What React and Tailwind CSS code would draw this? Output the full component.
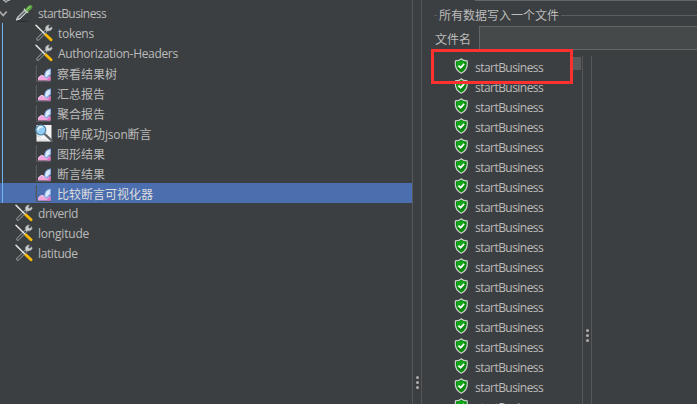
import React from "react";

function Tools() {
  return (
    <svg width="18" height="18" viewBox="0 0 18 18" fill="none" className="shrink-0">
      <path d="M2.8 15.2 10.5 7.5" stroke="#8f9496" strokeWidth="3.2" strokeLinecap="round" />
      <path d="M3 15 10.5 7.5" stroke="#34383a" strokeWidth="1.4" strokeLinecap="round" />
      <path d="M11.3 7.2 15.4 6.6 17.2 4.8 16.6 2.8 14.8 4.4 13.2 3.4 14.4 .9 12 1.4 10.4 3.4 10.4 5.8Z" fill="#c9cccc" stroke="#999d9e" strokeWidth=".6" />
      <path d="M1 1.2 9.6 9.8" stroke="#e6e6e6" strokeWidth="1.5" strokeLinecap="round" />
      <path d="M11 11 16 15.8" stroke="#f9bd09" strokeWidth="2.9" strokeLinecap="round" />
      <path d="M11.2 12.2 15.3 16.3" stroke="#e0a000" strokeWidth=".7" />
    </svg>
  );
}

function Dropper() {
  return (
    <svg width="19" height="18" viewBox="0 0 19 18" fill="none" className="shrink-0">
      <ellipse cx="8" cy="17.2" rx="7" ry=".8" fill="#2c2f31" />
      <path d="M1.2 16.2 2.6 13 9.6 6 11.9 8.2 5 15Z" fill="#a8aeae" stroke="#dfe3e3" strokeWidth=".8" />
      <path d="M4 13.8 10 7.8" stroke="#5c6364" strokeWidth="1.2" />
      <path d="M9 4.8 13 8.8" stroke="#c8dfc2" strokeWidth="1.5" />
      <path d="M10 5.2C11.6 4.4 12 2.2 14.4 1.2c2-.7 3.6.8 2.9 2.6-.9 2.1-3.2 2.7-4.1 4.2Z" fill="#58a040" />
      <path d="M12 5.3 15 2.6" stroke="#8fcf7a" strokeWidth="1.1" strokeLinecap="round" />
    </svg>
  );
}

function Graph() {
  return (
    <svg width="18" height="18" viewBox="0 0 18 18" fill="none" className="shrink-0">
      <path d="M1.5 1v16M1 17.5h15" stroke="#54575c" />
      <path d="M0 3.5h1M0 6.5h1M0 9.5h1M0 12.5h1" stroke="#505357" />
      <path d="M3 16.5V14L6.5 11 9 12 11 14 15.5 12V16.5Z" fill="#f0a5dc" />
      <path d="M3.3 13.9 6.5 11.3 9 12.3 10.5 14" stroke="#f9d2ef" />
      <path d="M9.3 11.3C9.3 7.5 11.8 5 16 4.5v6l-4.2 4.2C10.1 14.1 9.3 12.8 9.3 11.3Z" fill="#86abe6" />
      <path d="M10.2 10.9C10.6 7.9 12.6 6.1 14.9 5.7V9.5L11.6 13C10.5 12.5 10.1 11.9 10.2 10.9Z" fill="#dcebff" />
      <path d="m11.5 16.5 4-4.5V16.5Z" fill="#e36fc4" />
    </svg>
  );
}

function Search() {
  return (
    <svg width="18" height="18" viewBox="0 0 18 18" fill="none" className="shrink-0">
      <path d="M1.5 1H16.5V17.5H1.5Z" fill="#f5f5f5" />
      <path d="M2 12 6 13.5M2 16h10" stroke="#d4d4d4" />
      <path d="m10 10.4 6.7 6.2" stroke="#62666b" strokeWidth="2.2" strokeLinecap="round" />
      <circle cx="5.8" cy="6" r="5" fill="#94cdf1" stroke="#4d83a3" strokeWidth="1.2" />
      <path d="M3 5.7C3.4 3.5 5 2.7 7 3" stroke="#e2f5ff" strokeWidth="1.7" strokeLinecap="round" />
    </svg>
  );
}

function Shield() {
  return (
    <svg width="14" height="16" viewBox="0 0 14 16" fill="none" className="shrink-0">
      <path d="M7.3 .8C6 2.2 4 2.8 1.5 2.9 .7 8.3 2.5 12.8 7.3 15.2 12.1 12.8 13.9 8.3 13.1 2.9 10.6 2.8 8.6 2.2 7.3 .8Z" fill="#078a0c" stroke="#ccd0cc" strokeWidth="1.2" />
      <path d="M7.3 2.2C6 3.3 4.6 3.8 2.8 3.9 2.4 7 3 9 4 10.5L11.8 4C10 3.8 8.5 3.3 7.3 2.2Z" fill="#13a51a" />
      <path d="m4.5 7.7 2.1 2 3.6-3.8" stroke="#fff" strokeWidth="1.7" />
    </svg>
  );
}

const children = [
  [Tools, "tokens", "mt-px tracking-[-0.3px]"],
  [Tools, "Authorization-Headers", "mt-px tracking-[-0.33px]"],
  [Graph, "察看结果树", "mt-px -ml-px pt-0.5"],
  [Graph, "汇总报告", "mt-px -ml-px pt-0.5"],
  [Graph, "聚合报告", "mt-px -ml-px pt-0.5"],
  [Search, <>听单成功<span className="tracking-[-0.2px]">json</span>断言</>, "mt-px -ml-px pt-0.5"],
  [Graph, "图形结果", "mt-px -ml-px pt-0.5"],
  [Graph, "断言结果", "mt-px -ml-px pt-0.5"],
  [Graph, "比较断言可视化器", "mt-px -ml-px pt-0.5"],
];

function TreeRow({ icon: Icon, label, nested, selected, textClass }) {
  return (
    <div className={`flex h-5 items-center gap-[5px] ${nested ? "pl-[35px]" : "pl-[15px]"} ${selected ? "bg-[#4b6eaf] text-[#dddddd]" : ""}`}>
      <Icon />
      <span className={textClass}>{label}</span>
    </div>
  );
}

function Dots() {
  return (
    <div className="flex flex-col items-center gap-[2px]">
      <i className="size-[3px] rounded-full bg-[#adadad]" />
      <i className="size-[3px] rounded-full bg-[#adadad]" />
      <i className="size-[3px] rounded-full bg-[#adadad]" />
    </div>
  );
}

export default function App() {
  return (
    <div className="relative flex h-[404px] w-[697px] overflow-hidden whitespace-nowrap bg-[#3c3f41] font-['Open_Sans','Noto_Sans_CJK_SC',sans-serif] text-[12px] leading-5 text-[#bbbbbb]">
      <aside className="w-[412px] shrink-0">
        <div className="h-[3px] pl-[3px]">
          <svg width="8" height="3" viewBox="0 0 8 3">
            <path d="M0 0h2l1 1 1-1h3v1H5L3 3 1 1H0Z" fill="#a9adae" />
          </svg>
        </div>
        <div className="flex h-5 items-center">
          <svg width="15" height="18" viewBox="0 0 15 18" fill="none" className="shrink-0">
            <path d="m-.5 7.5 3.7 4 3.5-4" stroke="#adadad" strokeWidth="1.8" />
          </svg>
          <Dropper />
          <span className="ml-1 mt-px tracking-[-0.54px]">startBusiness</span>
        </div>
        <div className="relative">
          {children.map(([icon, label, textClass], i) => (
            <TreeRow key={i} icon={icon} label={label} textClass={textClass} nested selected={i === 8} />
          ))}
          <div className="absolute inset-y-0 left-[2px] w-px bg-[#70b5f5]" />
        </div>
        <TreeRow icon={Tools} label="driverId" textClass="mt-px tracking-[-0.45px]" />
        <TreeRow icon={Tools} label="longitude" textClass="mt-px tracking-[-0.2px]" />
        <TreeRow icon={Tools} label="latitude" textClass="mt-px tracking-[-0.38px]" />
      </aside>

      <div className="w-[10px] shrink-0 border-x border-[#555758] pt-[376px]">
        <Dots />
      </div>

      <main className="flex min-w-0 flex-1 flex-col">
        <div className="ml-[53px] h-px shrink-0 bg-[#646666]" />
        <div className="ml-3 flex h-[25px] shrink-0 items-center pt-[3px]">
          <div className="h-px w-[3px] bg-[#5b5d5e]" />
          <span className="mx-[2px] pt-px">所有数据写入一个文件</span>
          <div className="h-px flex-1 bg-[#5b5d5e]" />
        </div>
        <div className="flex h-6 shrink-0 pl-[13px]">
          <span className="w-[44px] pt-1">文件名</span>
          <div className="flex-1 border-y border-l border-[#646666] bg-[#45494a]" />
        </div>
        <div className="mt-[6px] flex min-h-0 flex-1">
          <div className="w-[150px] shrink-0 overflow-hidden pl-8">
            {Array.from({ length: 18 }, (_, i) => (
              <div key={i} className="flex h-5 items-center gap-[7px]">
                <Shield />
                <span className="mt-1 tracking-[-0.54px]">startBusiness</span>
              </div>
            ))}
          </div>
          <div className="w-[10px] shrink-0 pt-px">
            <div className="ml-px h-[13px] w-2 bg-[#585a5c]" />
          </div>
          <div className="w-[10px] shrink-0 border-x border-[#555758] pt-[273px]">
            <Dots />
          </div>
        </div>
      </main>

      <div className="absolute left-[431px] top-[49px] h-[35px] w-[142px] border-[3px] border-[#fc3130]" />
    </div>
  );
}
